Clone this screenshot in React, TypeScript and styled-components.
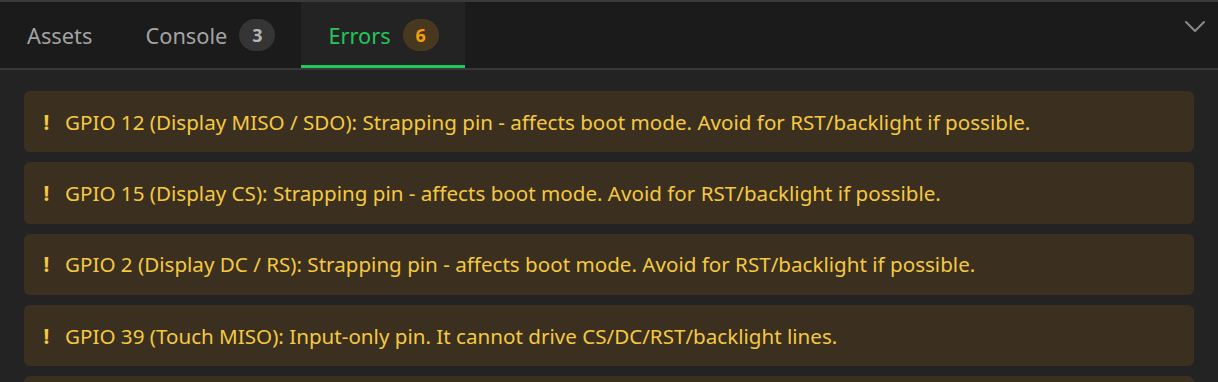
import React from "react";
import styled, { createGlobalStyle } from "styled-components";

const Global = createGlobalStyle`
  html, body { margin: 0; padding: 0; background: #232323; }
  body { font-family: "Noto Sans", "Open Sans", sans-serif; overflow: hidden; }
`;

const Panel = styled.div`
  width: 1218px;
  height: 382px;
  display: flex;
  flex-direction: column;
  background: #232323;
  border-top: 2px solid #3a3a3a;
  box-sizing: border-box;
  overflow: hidden;
`;

const TabBar = styled.div`
  height: 66px;
  display: flex;
  align-items: stretch;
  background: #1b1b1b;
  border-bottom: 2px solid #383838;
  flex-shrink: 0;
`;

const Tab = styled.div<{ $active?: boolean }>`
  display: flex;
  align-items: center;
  gap: 12px;
  padding: 0 26px 0 27px;
  font-size: 21.8px;
  color: ${(p) => (p.$active ? "#22c55e" : "#a3a3a3")};
  background: ${(p) => (p.$active ? "#232323" : "transparent")};
  box-shadow: ${(p) => (p.$active ? "inset 0 -3px 0 #22c55e" : "none")};
`;

const Badge = styled.span<{ $tone: "neutral" | "warn" }>`
  display: inline-flex;
  align-items: center;
  justify-content: center;
  width: 36px;
  height: 32px;
  border-radius: 16px;
  font-size: 18px;
  font-weight: 700;
  background: ${(p) => (p.$tone === "warn" ? "#483820" : "#353535")};
  color: ${(p) => (p.$tone === "warn" ? "#f59e0b" : "#b5b5b5")};
`;

const Spacer = styled.div`
  flex: 1;
`;

const Collapse = styled.div`
  display: flex;
  align-items: flex-start;
  padding: 18px 12px 0 0;
  color: #8a8a8a;
`;

const List = styled.div`
  display: flex;
  flex-direction: column;
  gap: 10px;
  padding: 21px 24px;
`;

const Card = styled.div`
  height: 61.33px;
  flex-shrink: 0;
  display: flex;
  align-items: center;
  gap: 16px;
  padding: 0 20px;
  background: #3b3020;
  border-radius: 6px;
  color: #f5c842;
  font-size: 20.6px;
  white-space: nowrap;
`;

const Bang = styled.span`
  font-weight: 700;
  width: 5px;
  display: inline-flex;
  justify-content: center;
`;

const messages = [
  "GPIO 12 (Display MISO / SDO): Strapping pin - affects boot mode. Avoid for RST/backlight if possible.",
  "GPIO 15 (Display CS): Strapping pin - affects boot mode. Avoid for RST/backlight if possible.",
  "GPIO 2 (Display DC / RS): Strapping pin - affects boot mode. Avoid for RST/backlight if possible.",
  "GPIO 39 (Touch MISO): Input-only pin. It cannot drive CS/DC/RST/backlight lines.",
  "GPIO 36 (Touch IRQ): Input-only pin. It cannot drive CS/DC/RST/backlight lines.",
  "GPIO 0: Strapping pin - affects boot mode.",
];

export default function App() {
  return (
    <>
      <Global />
      <Panel>
        <TabBar>
          <Tab>Assets</Tab>
          <Tab>
            Console <Badge $tone="neutral">3</Badge>
          </Tab>
          <Tab $active>
            Errors <Badge $tone="warn">6</Badge>
          </Tab>
          <Spacer />
          <Collapse>
            <svg width="22" height="14" viewBox="0 0 22 14" fill="none">
              <path d="M2 2l9 9 9-9" stroke="currentColor" strokeWidth="2" strokeLinecap="round" strokeLinejoin="round" />
            </svg>
          </Collapse>
        </TabBar>
        <List>
          {messages.map((m, i) => (
            <Card key={i}>
              <Bang>!</Bang>
              <span>{m}</span>
            </Card>
          ))}
        </List>
      </Panel>
    </>
  );
}
